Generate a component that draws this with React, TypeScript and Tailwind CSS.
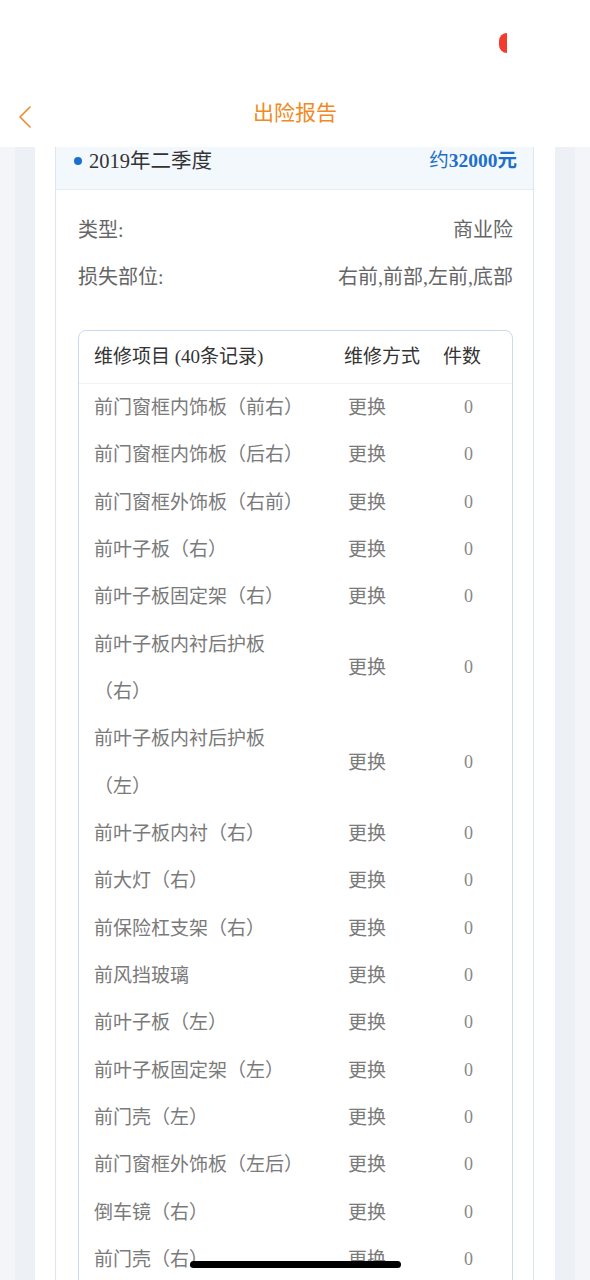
const FONT = { fontFamily: '"Liberation Serif", "Noto Sans CJK SC", serif' };

type Item = { name: string; method: string; count: number };

const items: Item[] = [
  { name: "前门窗框内饰板（前右）", method: "更换", count: 0 },
  { name: "前门窗框内饰板（后右）", method: "更换", count: 0 },
  { name: "前门窗框外饰板（右前）", method: "更换", count: 0 },
  { name: "前叶子板（右）", method: "更换", count: 0 },
  { name: "前叶子板固定架（右）", method: "更换", count: 0 },
  { name: "前叶子板内衬后护板（右）", method: "更换", count: 0 },
  { name: "前叶子板内衬后护板（左）", method: "更换", count: 0 },
  { name: "前叶子板内衬（右）", method: "更换", count: 0 },
  { name: "前大灯（右）", method: "更换", count: 0 },
  { name: "前保险杠支架（右）", method: "更换", count: 0 },
  { name: "前风挡玻璃", method: "更换", count: 0 },
  { name: "前叶子板（左）", method: "更换", count: 0 },
  { name: "前叶子板固定架（左）", method: "更换", count: 0 },
  { name: "前门壳（左）", method: "更换", count: 0 },
  { name: "前门窗框外饰板（左后）", method: "更换", count: 0 },
  { name: "倒车镜（右）", method: "更换", count: 0 },
  { name: "前门壳（右）", method: "更换", count: 0 },
];

function ChevronLeft() {
  return (
    <svg width="14" height="24" viewBox="0 0 14 24" fill="none">
      <path d="M12 2 L2 12 L12 22" stroke="#f0892a" strokeWidth="1.6" strokeLinecap="round" strokeLinejoin="round" />
    </svg>
  );
}

export default function App() {
  return (
    <div className="relative h-[1280px] w-[590px] overflow-hidden bg-white" style={FONT}>
      {/* status bar */}
      <div className="flex h-[88px] pl-[499px] pt-[33px]">
        <div className="h-[20px] w-[8px] rounded-l-full bg-[#f23c2e]" />
      </div>

      {/* nav */}
      <div className="relative flex h-[59px] items-center justify-center">
        <div className="absolute left-[18px] top-[17px]">
          <ChevronLeft />
        </div>
        <h1 className="pb-[9px] text-[21px] leading-[28px] text-[#f08a24]">出险报告</h1>
      </div>

      <div className="flex">
        <div className="w-[15px] bg-[#f3f5f8]" />
        <div className="w-[20px] bg-[#edf0f5]" />
        <div className="w-[520px] bg-white pl-[20px] pr-[21px]">
          <div className="border-x border-[#dde6ef]">
            <div className="flex h-[43px] items-start justify-between border-b border-[#e4ebf2] bg-[#f3f8fd] pl-[18px] pr-[16px]">
              <div className="flex items-center">
                <span className="mr-[7px] h-[8px] w-[8px] rounded-full bg-[#1a6fcf]" />
                <span className="text-[20.5px] leading-[28px] text-[#333]">2019年二季度</span>
              </div>
              <div className="text-[19.5px] leading-[28px] text-[#1e6fc9]">
                约<span className="font-bold">32000元</span>
              </div>
            </div>

            <div className="pl-[22px] pr-[20px] pt-[17px]">
              <div className="flex justify-between text-[20px] leading-[47px] text-[#666]">
                <span>类型:</span>
                <span>商业险</span>
              </div>
              <div className="flex justify-between text-[20px] leading-[47px] text-[#666]">
                <span>损失部位:</span>
                <span>右前,前部,左前,底部</span>
              </div>

              <div className="mt-[29px] rounded-[8px] border border-[#c9dcef] pb-[16px]">
                <div className="grid h-[53px] grid-cols-[250px_99px_1fr] items-center border-b border-[#f0f2f4] pl-[15px] text-[19px] text-[#333]">
                  <span>维修项目 (40条记录)</span>
                  <span>维修方式</span>
                  <span>件数</span>
                </div>
                {items.map((item, i) => (
                  <div
                    key={i}
                    className="grid grid-cols-[250px_99px_1fr] items-center pl-[15px] text-[19px] leading-[47.33px] text-[#7a7a7a]"
                  >
                    <span className="max-w-[215px]">{item.name}</span>
                    <span className="pl-[4px]">{item.method}</span>
                    <span className="pl-[21px] text-[18px] text-[#888]">{item.count}</span>
                  </div>
                ))}
              </div>
            </div>
          </div>
        </div>
        <div className="w-[20px] bg-[#edf0f5]" />
        <div className="w-[15px] bg-[#f3f5f8]" />
      </div>

      {/* home indicator */}
      <div className="absolute bottom-[12px] left-[190px] h-[7px] w-[211px] rounded-full bg-black" />
    </div>
  );
}
